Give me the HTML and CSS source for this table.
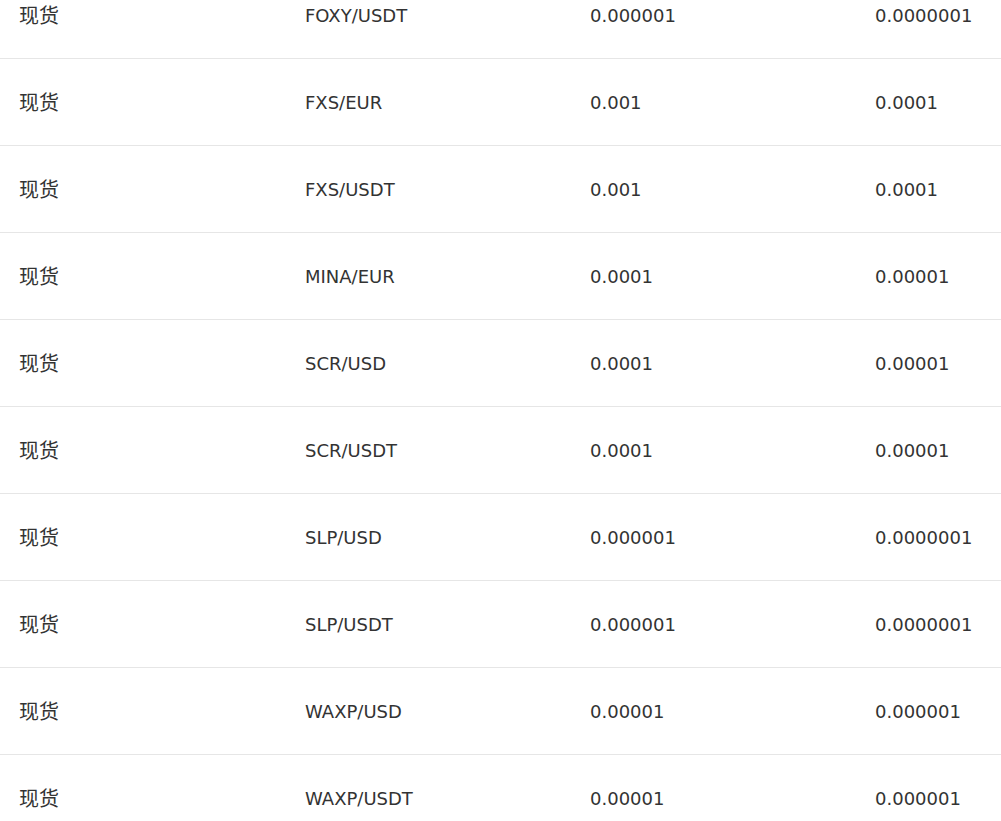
FILE: index.html
```html
<!DOCTYPE html>
<html lang="zh">
<head>
<meta charset="utf-8">
<link rel="stylesheet" href="styles.css">
</head>
<body>
<div class="table">
  <div class="row"><div class="cell type">现货</div><div class="cell">FOXY/USDT</div><div class="cell">0.000001</div><div class="cell">0.0000001</div></div>
  <div class="row"><div class="cell type">现货</div><div class="cell">FXS/EUR</div><div class="cell">0.001</div><div class="cell">0.0001</div></div>
  <div class="row"><div class="cell type">现货</div><div class="cell">FXS/USDT</div><div class="cell">0.001</div><div class="cell">0.0001</div></div>
  <div class="row"><div class="cell type">现货</div><div class="cell">MINA/EUR</div><div class="cell">0.0001</div><div class="cell">0.00001</div></div>
  <div class="row"><div class="cell type">现货</div><div class="cell">SCR/USD</div><div class="cell">0.0001</div><div class="cell">0.00001</div></div>
  <div class="row"><div class="cell type">现货</div><div class="cell">SCR/USDT</div><div class="cell">0.0001</div><div class="cell">0.00001</div></div>
  <div class="row"><div class="cell type">现货</div><div class="cell">SLP/USD</div><div class="cell">0.000001</div><div class="cell">0.0000001</div></div>
  <div class="row"><div class="cell type">现货</div><div class="cell">SLP/USDT</div><div class="cell">0.000001</div><div class="cell">0.0000001</div></div>
  <div class="row"><div class="cell type">现货</div><div class="cell">WAXP/USD</div><div class="cell">0.00001</div><div class="cell">0.000001</div></div>
  <div class="row"><div class="cell type">现货</div><div class="cell">WAXP/USDT</div><div class="cell">0.00001</div><div class="cell">0.000001</div></div>
</div>
</body>
</html>
```
FILE: styles.css
```css
html, body {
  margin: 0;
  padding: 0;
  background: #fff;
  overflow: hidden;
}
body {
  font-family: "DejaVu Sans", "Noto Sans CJK SC", sans-serif;
  font-size: 18px;
  color: #333;
}
.table {
  width: 100%;
  margin-top: -28px;
}
.row {
  display: grid;
  grid-template-columns: 285px 285px 285px 1fr;
  height: 86px;
  align-items: center;
  border-bottom: 1px solid #e6e6e6;
}
.cell {
  padding-left: 20px;
  padding-top: 1px;
  line-height: 24px;
  white-space: nowrap;
}
.cell.type {
  font-size: 20px;
  padding-left: 19px;
}
```
